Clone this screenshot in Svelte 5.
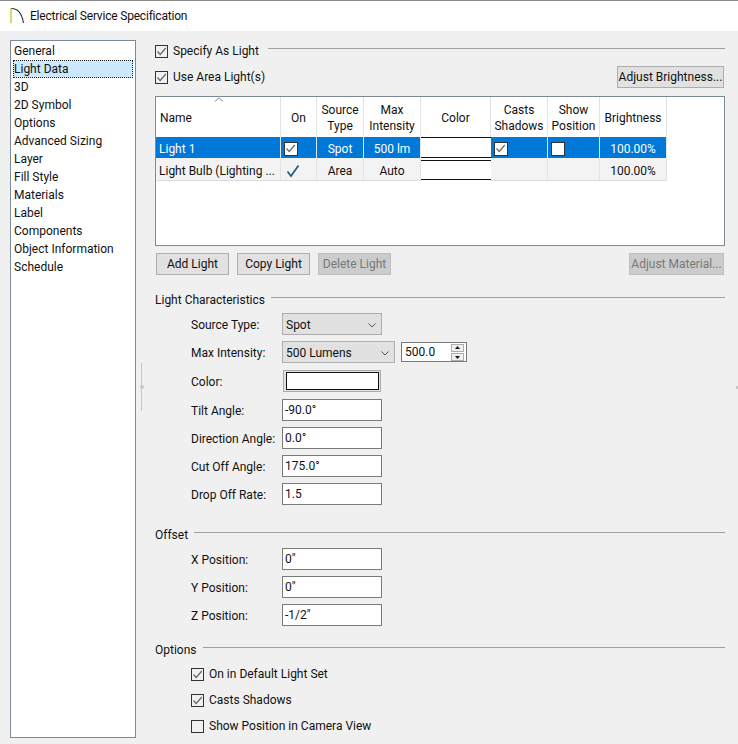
<script lang="ts">
  const categories = [
    "General", "Light Data", "3D", "2D Symbol", "Options", "Advanced Sizing", "Layer",
    "Fill Style", "Materials", "Label", "Components", "Object Information", "Schedule"
  ];
  const selected = "Light Data";

  // light characteristics fields with plain text inputs
  const angleFields = [
    { label: "Tilt Angle:", value: "-90.0°" },
    { label: "Direction Angle:", value: "0.0°" },
    { label: "Cut Off Angle:", value: "175.0°" },
    { label: "Drop Off Rate:", value: "1.5" }
  ];
  const offsetFields = [
    { label: "X Position:", value: '0"' },
    { label: "Y Position:", value: '0"' },
    { label: "Z Position:", value: '-1/2"' }
  ];
  const optionChecks = [
    { label: "On in Default Light Set", on: true },
    { label: "Casts Shadows", on: true },
    { label: "Show Position in Camera View", on: false }
  ];
</script>

{#snippet check(on: boolean)}
  <span class="check">
    {#if on}
      <svg width="11" height="11" viewBox="0 0 11 11"><path d="M1.5 5.5 L4.2 8.5 L9.8 2" fill="none" stroke="#666" stroke-width="1.2" /></svg>
    {/if}
  </span>
{/snippet}

{#snippet chevron()}
  <svg class="chev" width="8" height="5" viewBox="0 0 8 5"><path d="M0.5 0.5 L4 4 L7.5 0.5" fill="none" stroke="#555" stroke-width="1" /></svg>
{/snippet}

<div class="window">
  <header class="titlebar">
    <svg width="16" height="20" viewBox="0 0 16 20">
      <path d="M1 2 V17" stroke="#a8d030" stroke-width="1.3" fill="none" />
      <path d="M1.5 2.5 C8 2.5 12 8 13.5 17" stroke="#333" stroke-width="1.2" fill="none" />
    </svg>
    <span class="title">Electrical Service Specification</span>
  </header>

  <div class="body">
    <ul class="sidebar">
      {#each categories as item}
        <li class:active={item === selected}>{item}</li>
      {/each}
    </ul>

    <div class="splitter"><i></i><b></b><i></i></div>

    <main>
      <div class="head-row first">
        <label class="box-label">{@render check(true)}Specify As Light</label>
        <span class="rule"></span>
      </div>
      <div class="area-row">
        <label class="box-label">{@render check(true)}Use Area Light(s)</label>
        <button class="btn">Adjust Brightness...</button>
      </div>

      <div class="table-wrap">
        <svg class="sort" width="10" height="5" viewBox="0 0 10 5"><path d="M1 4.5 L5 0.8 L9 4.5" fill="none" stroke="#888" stroke-width="1" /></svg>
        <div class="grid">
          <div class="th left">Name</div>
          <div class="th">On</div>
          <div class="th">Source<br />Type</div>
          <div class="th">Max<br />Intensity</div>
          <div class="th">Color</div>
          <div class="th">Casts<br />Shadows</div>
          <div class="th">Show<br />Position</div>
          <div class="th">Brightness</div>

          <div class="td sel left">Light 1</div>
          <div class="td sel start">{@render check(true)}</div>
          <div class="td sel">Spot</div>
          <div class="td sel">500 lm</div>
          <div class="swatch"><span></span></div>
          <div class="td sel start">{@render check(true)}</div>
          <div class="td sel start">{@render check(false)}</div>
          <div class="td sel">100.00%</div>

          <div class="td left">Light Bulb (Lighting ...</div>
          <div class="td start">
            <svg width="14" height="14" viewBox="0 0 14 14"><path d="M1.5 7.5 L5 12 L12.5 1.5" fill="none" stroke="#1d5f80" stroke-width="1.7" /></svg>
          </div>
          <div class="td">Area</div>
          <div class="td">Auto</div>
          <div class="swatch second"><span></span></div>
          <div class="td"></div>
          <div class="td"></div>
          <div class="td">100.00%</div>
        </div>
      </div>

      <div class="btn-row">
        <button class="btn w73">Add Light</button>
        <button class="btn w73">Copy Light</button>
        <button class="btn w73" disabled>Delete Light</button>
        <button class="btn push" disabled>Adjust Material...</button>
      </div>

      <div class="section-head chars"><span>Light Characteristics</span><span class="rule"></span></div>
      <div class="fields">
        <div class="field">
          <span class="lbl">Source Type:</span>
          <div class="select s100">Spot{@render chevron()}</div>
        </div>
        <div class="field">
          <span class="lbl">Max Intensity:</span>
          <div class="select s113">500 Lumens{@render chevron()}</div>
          <div class="spin">
            <span>500.0</span>
            <span class="arrows">
              <svg width="13" height="8" viewBox="0 0 13 8"><rect x="0.5" y="0.5" width="12" height="7" fill="#f0f0f0" stroke="#adadad" /><path d="M6.5 2 L9 5 H4 Z" fill="#111" /></svg>
              <svg width="13" height="8" viewBox="0 0 13 8"><rect x="0.5" y="0.5" width="12" height="7" fill="#f0f0f0" stroke="#adadad" /><path d="M6.5 6 L9 3 H4 Z" fill="#111" /></svg>
            </span>
          </div>
        </div>
        <div class="field color-row">
          <span class="lbl">Color:</span>
          <div class="color-btn"><span></span></div>
        </div>
        {#each angleFields as f}
          <div class="field">
            <span class="lbl">{f.label}</span>
            <div class="input">{f.value}</div>
          </div>
        {/each}
      </div>

      <div class="section-head offset"><span>Offset</span><span class="rule"></span></div>
      <div class="fields">
        {#each offsetFields as f}
          <div class="field">
            <span class="lbl">{f.label}</span>
            <div class="input">{f.value}</div>
          </div>
        {/each}
      </div>

      <div class="section-head options"><span>Options</span><span class="rule"></span></div>
      <div class="opts">
        {#each optionChecks as o}
          <label class="box-label">{@render check(o.on)}{o.label}</label>
        {/each}
      </div>
    </main>
  </div>

  <span class="edge-mark"></span>
</div>

<style>
  :global(body) {
    margin: 0;
    background: #f0f0f0;
  }

  .window {
    position: relative;
    width: 738px;
    height: 744px;
    overflow: hidden;
    box-sizing: border-box;
    border-top: 1px solid #8a8a8a;
    font-family: Roboto, "Noto Sans", sans-serif;
    font-size: 12px;
    color: #111;
    background: #f0f0f0;
  }

  .titlebar {
    height: 30px;
    background: #fff;
    display: flex;
    align-items: center;
    gap: 4px;
    padding-left: 10px;
  }

  .title {
    letter-spacing: -0.2px;
  }

  .edge-mark {
    position: absolute;
    right: 0;
    top: 385px;
    width: 2px;
    height: 3px;
    background: #c8c8c8;
  }

  .body {
    display: flex;
    padding-top: 9px;
  }

  .sidebar {
    list-style: none;
    margin: 0 0 0 10px;
    padding: 1px 2px;
    width: 120px;
    height: 694px;
    background: #fff;
    border: 1px solid #7f8a99;
  }

  .sidebar li {
    height: 18px;
    line-height: 18px;
    padding-left: 1px;
    box-sizing: border-box;
  }

  .sidebar li.active {
    background: #cce8ff;
    outline: 1px dotted #222;
    outline-offset: -1px;
  }

  .splitter {
    width: 11px;
    height: 48px;
    margin: 323px 8px 0 0;
    display: flex;
    flex-direction: column;
    align-items: center;
  }

  .splitter i {
    flex: 1;
    width: 1px;
    background: #c8c8c8;
  }

  .splitter b {
    width: 4px;
    height: 4px;
    border-radius: 2px;
    background: #c8c8c8;
  }

  main {
    width: 570px;
  }

  .rule {
    flex: 1;
    height: 1px;
    margin-bottom: 6px;
    background: #a0a0a0;
  }

  .head-row {
    display: flex;
    align-items: center;
    gap: 9px;
    height: 22px;
  }

  .box-label {
    display: flex;
    align-items: center;
    gap: 5px;
    height: 22px;
    white-space: nowrap;
  }

  .check {
    width: 11px;
    height: 11px;
    border: 1px solid #333;
    background: #fff;
    display: inline-flex;
    flex: none;
  }

  .head-row .check,
  .area-row .check,
  .opts .check {
    background: transparent;
  }

  .area-row {
    display: flex;
    justify-content: space-between;
    align-items: center;
    height: 22px;
    margin-top: 4px;
    padding-right: 1px;
  }

  .btn {
    height: 22px;
    padding: 0;
    box-sizing: border-box;
    background: #e1e1e1;
    border: 1px solid #adadad;
    font: inherit;
    color: #111;
    width: 107px;
    white-space: nowrap;
  }

  .btn:disabled {
    background: #cccccc;
    border-color: #bfbfbf;
    color: #787878;
  }

  .btn.w73 {
    width: 73px;
  }

  .btn.push {
    margin-left: auto;
    margin-right: 1px;
    width: 95px;
  }

  .table-wrap {
    position: relative;
    margin-top: 8px;
    height: 148px;
    background: #fff;
    border: 1px solid #7f8a99;
  }

  .sort {
    position: absolute;
    left: 58px;
    top: 0;
  }

  .grid {
    display: grid;
    grid-template-columns: 125px 36px 47px 57px 70px 57px 52px 67px;
    grid-template-rows: 40px 22px 22px;
    width: max-content;
  }

  .th,
  .td {
    display: flex;
    align-items: center;
    justify-content: center;
    box-sizing: border-box;
    text-align: center;
    border-right: 1px solid #e3e3e3;
    white-space: nowrap;
  }

  .th {
    line-height: 16px;
    padding-top: 1px;
  }

  .th.left {
    justify-content: flex-start;
    padding-left: 4px;
  }

  .td {
    padding-top: 2px;
    background: #f3f3f3;
    border-bottom: 1px solid #dcdcdc;
  }

  .td.left {
    justify-content: flex-start;
    padding-left: 3px;
  }

  .td.start {
    justify-content: flex-start;
    padding-left: 5px;
  }

  .td.sel {
    background: #0078d7;
    color: #fff;
    border-right-color: #dfe8ef;
    border-bottom-color: #f0f0f0;
  }

  .td.sel .check {
    width: 12px;
    height: 12px;
  }

  .td.sel.start {
    padding-left: 3px;
  }

  .swatch {
    display: flex;
    flex-direction: column;
    padding-bottom: 1px;
    background: #fff;
  }

  .swatch.second {
    padding-top: 1px;
  }

  .swatch span {
    flex: 1;
    border-top: 1px solid #111;
    border-bottom: 1px solid #111;
  }

  .btn-row {
    display: flex;
    gap: 8px;
    margin-top: 7px;
    padding-left: 1px;
  }

  .section-head {
    display: flex;
    align-items: center;
    gap: 6px;
    height: 16px;
  }

  .section-head.chars {
    margin-top: 17px;
  }

  .section-head.offset {
    margin-top: 22px;
  }

  .section-head.options {
    margin-top: 16px;
  }

  .fields {
    display: flex;
    flex-direction: column;
    gap: 6px;
    margin-top: 5px;
    padding-left: 36px;
  }

  .field {
    display: flex;
    align-items: center;
    height: 22px;
  }

  .field.color-row {
    margin-top: 2px;
  }

  .lbl {
    width: 91px;
    flex: none;
    padding-top: 2px;
  }

  .color-row .lbl {
    padding-top: 0;
  }

  .select {
    height: 22px;
    box-sizing: border-box;
    background: #e1e1e1;
    border: 1px solid #adadad;
    display: flex;
    align-items: center;
    justify-content: space-between;
    padding: 2px 5px 0 3px;
  }

  .s100 {
    width: 100px;
  }

  .s113 {
    width: 113px;
  }

  .spin {
    width: 66px;
    height: 20px;
    margin-left: 6px;
    box-sizing: border-box;
    border: 1px solid #7a7a7a;
    background: #fff;
    display: flex;
    align-items: center;
    justify-content: space-between;
    padding: 0 2px 0 3px;
  }

  .arrows {
    display: flex;
    flex-direction: column;
    gap: 1px;
  }

  .arrows svg {
    display: block;
  }

  .color-btn {
    width: 98px;
    height: 22px;
    margin: -2px 0 0 1px;
    box-sizing: border-box;
    border: 1px solid #adadad;
    background: #e1e1e1;
    padding: 1px 1px 1px 2px;
    display: flex;
  }

  .color-btn span {
    flex: 1;
    background: #fff;
    border: 1px solid #111;
  }

  .input {
    width: 100px;
    height: 22px;
    box-sizing: border-box;
    border: 1px solid #7a7a7a;
    background: #fff;
    line-height: 20px;
    padding-left: 2px;
  }

  .opts {
    display: flex;
    flex-direction: column;
    gap: 4px;
    margin-top: 5px;
    padding-left: 36px;
  }
</style>
